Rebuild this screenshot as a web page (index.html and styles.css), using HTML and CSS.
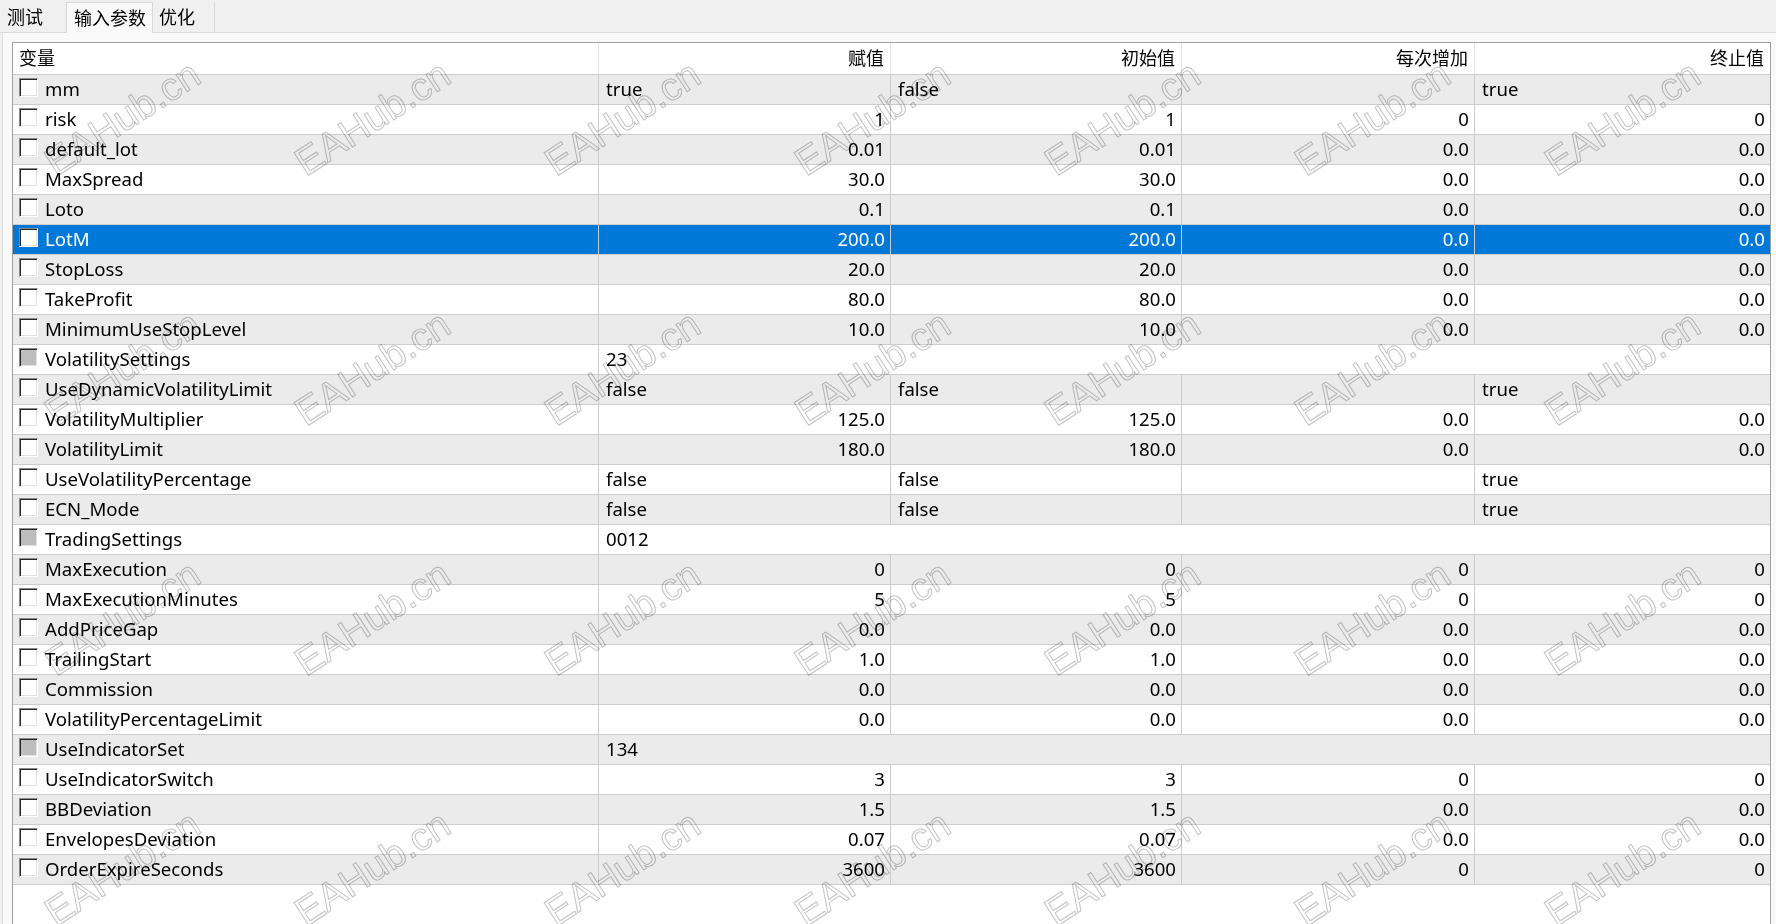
FILE: index.html
```html
<!DOCTYPE html>
<html lang="zh-CN">
<head>
    <meta charset="UTF-8">
    <meta name="viewport" content="width=device-width, initial-scale=1.0">
    <title>输入参数</title>
    <link rel="stylesheet" href="styles.css">
</head>
<body>
    <div class="tabs">
        <div class="tab tab-test">测试</div>
        <div class="tab tab-active">输入参数</div>
        <div class="tab tab-opt">优化</div>
    </div>

    <div class="panel">
        <div class="params">
            <div class="head">
                <div>变量</div>
                <div>赋值</div>
                <div>初始值</div>
                <div>每次增加</div>
                <div>终止值</div>
            </div>

            <div class="row alt"><div class="name"><span class="check"></span>mm</div><div>true</div><div>false</div><div></div><div>true</div></div>
            <div class="row"><div class="name"><span class="check"></span>risk</div><div class="num">1</div><div class="num">1</div><div class="num">0</div><div class="num">0</div></div>
            <div class="row alt"><div class="name"><span class="check"></span>default_lot</div><div class="num">0.01</div><div class="num">0.01</div><div class="num">0.0</div><div class="num">0.0</div></div>
            <div class="row"><div class="name"><span class="check"></span>MaxSpread</div><div class="num">30.0</div><div class="num">30.0</div><div class="num">0.0</div><div class="num">0.0</div></div>
            <div class="row alt"><div class="name"><span class="check"></span>Loto</div><div class="num">0.1</div><div class="num">0.1</div><div class="num">0.0</div><div class="num">0.0</div></div>
            <div class="row sel"><div class="name"><span class="check"></span>LotM</div><div class="num">200.0</div><div class="num">200.0</div><div class="num">0.0</div><div class="num">0.0</div></div>
            <div class="row alt"><div class="name"><span class="check"></span>StopLoss</div><div class="num">20.0</div><div class="num">20.0</div><div class="num">0.0</div><div class="num">0.0</div></div>
            <div class="row"><div class="name"><span class="check"></span>TakeProfit</div><div class="num">80.0</div><div class="num">80.0</div><div class="num">0.0</div><div class="num">0.0</div></div>
            <div class="row alt"><div class="name"><span class="check"></span>MinimumUseStopLevel</div><div class="num">10.0</div><div class="num">10.0</div><div class="num">0.0</div><div class="num">0.0</div></div>
            <div class="row"><div class="name"><span class="check part"></span>VolatilitySettings</div><div class="wide">23</div></div>
            <div class="row alt"><div class="name"><span class="check"></span>UseDynamicVolatilityLimit</div><div>false</div><div>false</div><div></div><div>true</div></div>
            <div class="row"><div class="name"><span class="check"></span>VolatilityMultiplier</div><div class="num">125.0</div><div class="num">125.0</div><div class="num">0.0</div><div class="num">0.0</div></div>
            <div class="row alt"><div class="name"><span class="check"></span>VolatilityLimit</div><div class="num">180.0</div><div class="num">180.0</div><div class="num">0.0</div><div class="num">0.0</div></div>
            <div class="row"><div class="name"><span class="check"></span>UseVolatilityPercentage</div><div>false</div><div>false</div><div></div><div>true</div></div>
            <div class="row alt"><div class="name"><span class="check"></span>ECN_Mode</div><div>false</div><div>false</div><div></div><div>true</div></div>
            <div class="row"><div class="name"><span class="check part"></span>TradingSettings</div><div class="wide">0012</div></div>
            <div class="row alt"><div class="name"><span class="check"></span>MaxExecution</div><div class="num">0</div><div class="num">0</div><div class="num">0</div><div class="num">0</div></div>
            <div class="row"><div class="name"><span class="check"></span>MaxExecutionMinutes</div><div class="num">5</div><div class="num">5</div><div class="num">0</div><div class="num">0</div></div>
            <div class="row alt"><div class="name"><span class="check"></span>AddPriceGap</div><div class="num">0.0</div><div class="num">0.0</div><div class="num">0.0</div><div class="num">0.0</div></div>
            <div class="row"><div class="name"><span class="check"></span>TrailingStart</div><div class="num">1.0</div><div class="num">1.0</div><div class="num">0.0</div><div class="num">0.0</div></div>
            <div class="row alt"><div class="name"><span class="check"></span>Commission</div><div class="num">0.0</div><div class="num">0.0</div><div class="num">0.0</div><div class="num">0.0</div></div>
            <div class="row"><div class="name"><span class="check"></span>VolatilityPercentageLimit</div><div class="num">0.0</div><div class="num">0.0</div><div class="num">0.0</div><div class="num">0.0</div></div>
            <div class="row alt"><div class="name"><span class="check part"></span>UseIndicatorSet</div><div class="wide">134</div></div>
            <div class="row"><div class="name"><span class="check"></span>UseIndicatorSwitch</div><div class="num">3</div><div class="num">3</div><div class="num">0</div><div class="num">0</div></div>
            <div class="row alt"><div class="name"><span class="check"></span>BBDeviation</div><div class="num">1.5</div><div class="num">1.5</div><div class="num">0.0</div><div class="num">0.0</div></div>
            <div class="row"><div class="name"><span class="check"></span>EnvelopesDeviation</div><div class="num">0.07</div><div class="num">0.07</div><div class="num">0.0</div><div class="num">0.0</div></div>
            <div class="row alt"><div class="name"><span class="check"></span>OrderExpireSeconds</div><div class="num">3600</div><div class="num">3600</div><div class="num">0</div><div class="num">0</div></div>
        </div>
    </div>

    <!-- watermark layer -->
    <div class="marks">
        <div class="marks-grid">
            <span class="mark">EAHub.cn</span><span class="mark">EAHub.cn</span><span class="mark">EAHub.cn</span><span class="mark">EAHub.cn</span><span class="mark">EAHub.cn</span><span class="mark">EAHub.cn</span><span class="mark">EAHub.cn</span>
            <span class="mark">EAHub.cn</span><span class="mark">EAHub.cn</span><span class="mark">EAHub.cn</span><span class="mark">EAHub.cn</span><span class="mark">EAHub.cn</span><span class="mark">EAHub.cn</span><span class="mark">EAHub.cn</span>
            <span class="mark">EAHub.cn</span><span class="mark">EAHub.cn</span><span class="mark">EAHub.cn</span><span class="mark">EAHub.cn</span><span class="mark">EAHub.cn</span><span class="mark">EAHub.cn</span><span class="mark">EAHub.cn</span>
            <span class="mark">EAHub.cn</span><span class="mark">EAHub.cn</span><span class="mark">EAHub.cn</span><span class="mark">EAHub.cn</span><span class="mark">EAHub.cn</span><span class="mark">EAHub.cn</span><span class="mark">EAHub.cn</span>
        </div>
    </div>
</body>
</html>
```

FILE: styles.css
```css
* {
    box-sizing: border-box;
}

body {
    margin: 0;
    height: 924px;
    overflow: hidden;
    position: relative;
    display: flex;
    flex-direction: column;
    font-family: "Noto Sans", "Noto Sans CJK SC", sans-serif;
    font-size: 18px;
    color: #000;
    background-color: #f0f0f0;
}

.tabs {
    display: flex;
    height: 33px;
    border-bottom: 1px solid #d9d9d9;
    background-color: #f0f0f0;
}

.tab {
    height: 29px;
    margin-top: 3px;
    padding-left: 7px;
    line-height: 29px;
    white-space: nowrap;
}

.tab-test {
    width: 66px;
}

.tab-active {
    width: 87px;
    height: 31px;
    margin-top: 2px;
    margin-bottom: -1px;
    background-color: #f9f9f9;
    border: 1px solid #d9d9d9;
    border-bottom: none;
    line-height: 30px;
}

.tab-opt {
    width: 62px;
    border-right: 1px solid #d9d9d9;
    padding-left: 6px;
}

.panel {
    flex: 1;
    display: flex;
    min-height: 0;
    margin-left: 2px;
    padding: 9px 5px 0 9px;
    background-color: #f9f9f9;
    border-left: 1px solid #dcdcdc;
}

.params {
    flex: 1;
    background-color: #fff;
    border: 1px solid #a0a0a0;
    border-bottom: none;
}

.head,
.row {
    display: grid;
    grid-template-columns: 585px 292px 291px 293px 1fr;
}

.head {
    height: 32px;
    border-bottom: 1px solid #cdcdcd;
}

.head div {
    line-height: 31px;
    padding: 0 6px 0 6px;
    white-space: nowrap;
}

.head div + div {
    border-left: 1px solid #e5e5e5;
    text-align: right;
}

.row {
    height: 30px;
    font-size: 18.6px;
    border-bottom: 1px solid #cdcdcd;
}

.row.alt {
    background-color: #ebebeb;
}

.row.sel {
    background-color: #0078d7;
    color: #fff;
}

.row > div {
    line-height: 27px;
    padding: 0 5px 0 7px;
    white-space: nowrap;
    overflow: hidden;
}

.row > div + div {
    border-left: 1px solid #cdcdcd;
}

.row .num {
    text-align: right;
}

.row .wide {
    grid-column: 2 / -1;
}

.row .name {
    display: flex;
    align-items: flex-start;
    padding-left: 6px;
}

.check {
    flex: none;
    width: 19px;
    height: 19px;
    margin-right: 7px;
    margin-top: 3px;
    background-color: #fff;
    border: 1px solid;
    border-color: #8a8a8a #fff #fff #8a8a8a;
    box-shadow: inset 1px 1px 0 #262626, inset -1px -1px 0 #e3e3e3;
}

.check.part {
    background-color: #bdbdbd;
}

.marks {
    position: absolute;
    left: 0;
    top: 0;
    width: 1776px;
    height: 924px;
    overflow: hidden;
    pointer-events: none;
    mix-blend-mode: multiply;
}

.marks-grid {
    display: grid;
    grid-template-columns: repeat(7, 250px);
    grid-auto-rows: 250px;
    margin-left: 56px;
    margin-top: -73px;
}

.mark {
    align-self: end;
    justify-self: start;
    margin-bottom: -6px;
    font-family: "Liberation Sans", Arial, sans-serif;
    font-size: 39px;
    line-height: 38px;
    white-space: nowrap;
    color: transparent;
    -webkit-text-stroke: 1px #c4c4c4;
    transform-origin: 0 32px;
    transform: rotate(-33deg);
}
```
